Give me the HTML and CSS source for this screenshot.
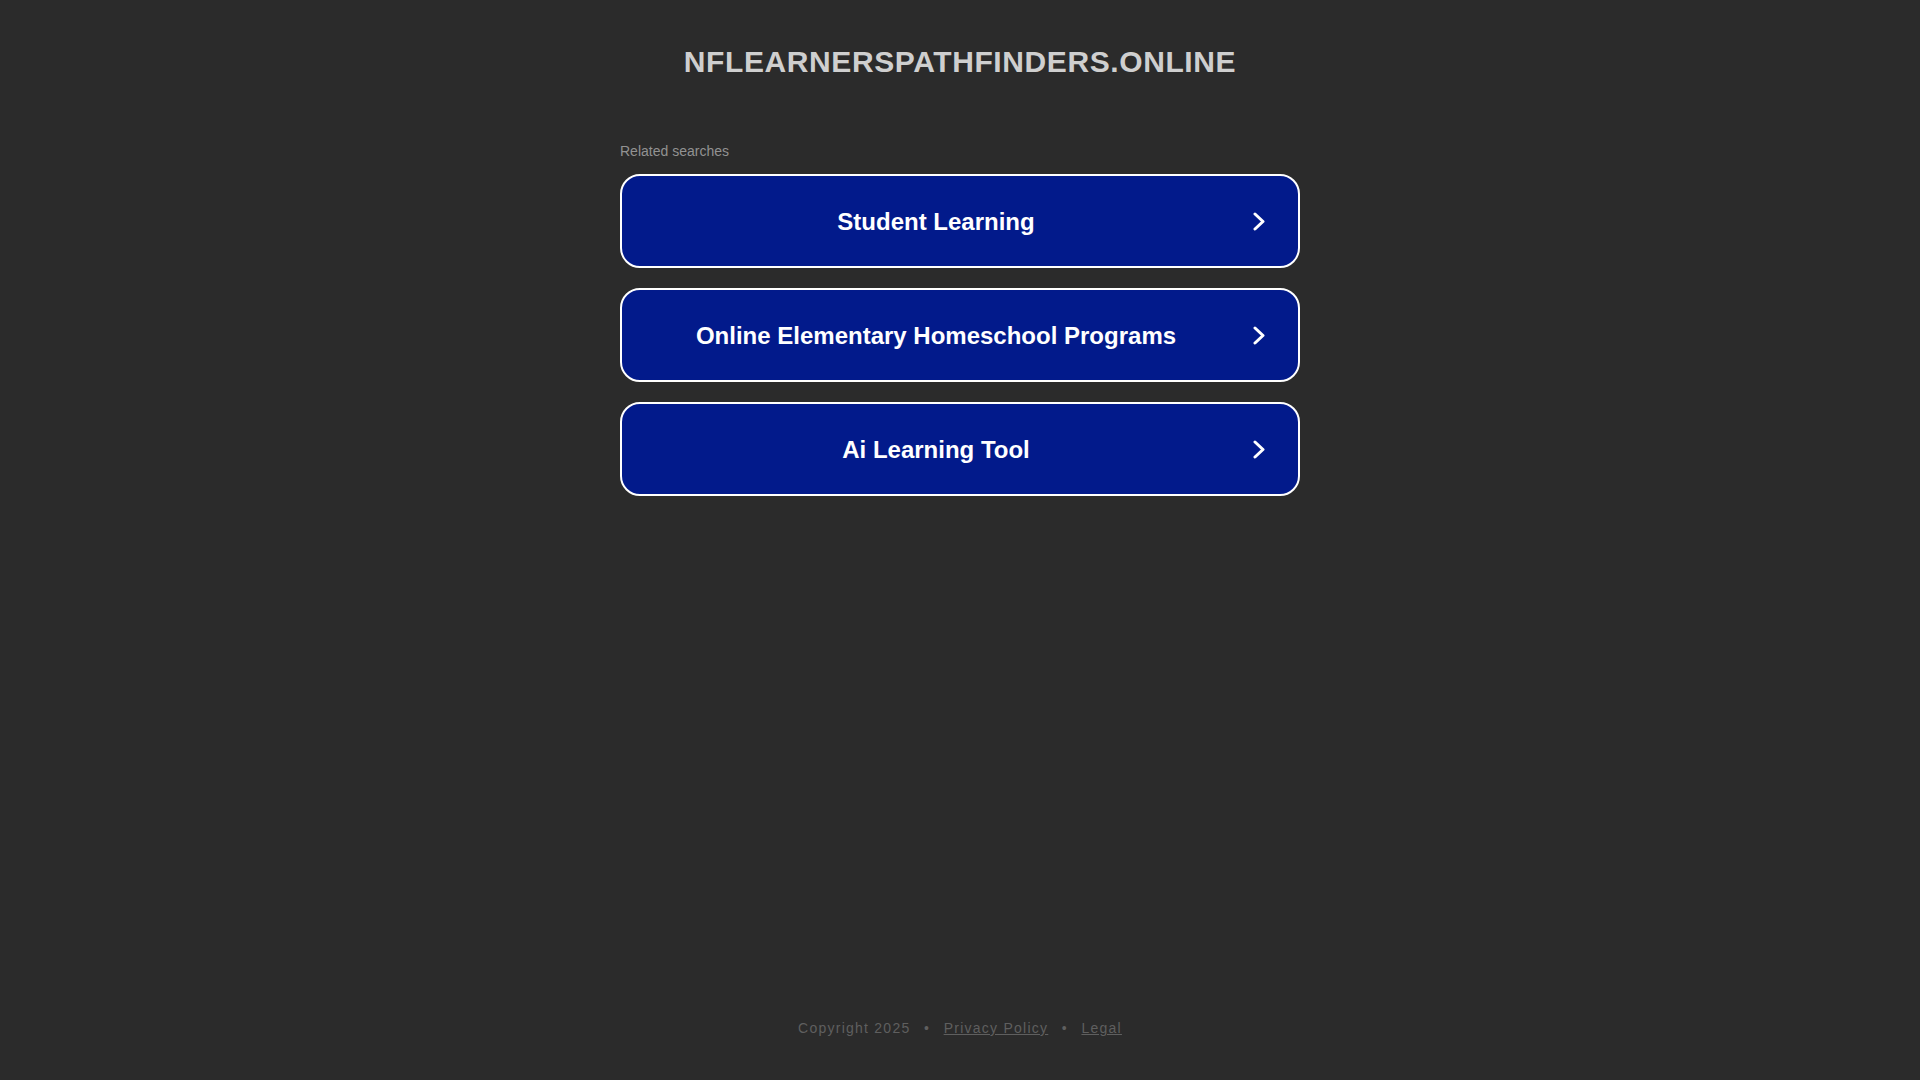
FILE: index.html
```html
<!DOCTYPE html>
<html lang="en">
<head>
<meta charset="utf-8">
<title>nflearnerspathfinders.online</title>
<link rel="stylesheet" href="styles.css">
</head>
<body>
<div class="page">
  <header class="header">
    <h1 class="domain">NFLEARNERSPATHFINDERS.ONLINE</h1>
  </header>
  <main class="ads">
    <p class="ads-title">Related searches</p>
    <ul class="ads-list">
      <li><a class="ad" href="#"><span class="ad-text">Student Learning</span><svg class="chev" viewBox="0 0 12 19" width="12" height="19"><polyline points="2,2 10,9.5 2,17" /></svg></a></li>
      <li><a class="ad" href="#"><span class="ad-text">Online Elementary Homeschool Programs</span><svg class="chev" viewBox="0 0 12 19" width="12" height="19"><polyline points="2,2 10,9.5 2,17" /></svg></a></li>
      <li><a class="ad" href="#"><span class="ad-text">Ai Learning Tool</span><svg class="chev" viewBox="0 0 12 19" width="12" height="19"><polyline points="2,2 10,9.5 2,17" /></svg></a></li>
    </ul>
  </main>
  <footer class="footer">
    <span>Copyright 2025</span><span class="sep">•</span><a href="#">Privacy Policy</a><span class="sep">•</span><a href="#">Legal</a>
  </footer>
</div>
</body>
</html>
```

FILE: styles.css
```css
html, body {
  margin: 0;
  padding: 0;
  background: #2b2b2b;
  font-family: "Liberation Sans", Arial, sans-serif;
}
.page {
  min-height: 100vh;
  display: flex;
  flex-direction: column;
  align-items: center;
  box-sizing: border-box;
  padding: 44px 0 44px;
}
.header {
  width: 100%;
  text-align: center;
}
.domain {
  margin: 0;
  font-size: 30px;
  line-height: 36px;
  font-weight: bold;
  letter-spacing: 0.6px;
  color: #cfcfcf;
}
.ads {
  width: 680px;
  margin-top: 63px;
}
.ads-title {
  margin: 0 0 15px;
  font-size: 14px;
  line-height: 16px;
  color: #929292;
}
.ads-list {
  list-style: none;
  margin: 0;
  padding: 0;
  display: flex;
  flex-direction: column;
  gap: 20px;
}
.ad {
  display: flex;
  align-items: center;
  box-sizing: border-box;
  height: 94px;
  padding: 1px 33px 0 25px;
  background: #021a8b;
  border: 2px solid #ffffff;
  border-radius: 20px;
  color: #ffffff;
  text-decoration: none;
}
.ad-text {
  flex: 1;
  text-align: center;
  font-size: 24px;
  font-weight: bold;
}
.chev {
  margin-left: 28px;
  flex: none;
}
.chev polyline {
  fill: none;
  stroke: #ffffff;
  stroke-width: 3;
  stroke-linecap: round;
  stroke-linejoin: round;
}
.footer {
  margin-top: auto;
  font-size: 14px;
  line-height: 16px;
  letter-spacing: 1.25px;
  color: #5f5f5f;
}
.footer a {
  color: #5f5f5f;
  text-decoration: underline;
}
.sep {
  margin: 0 13.5px;
}
```
